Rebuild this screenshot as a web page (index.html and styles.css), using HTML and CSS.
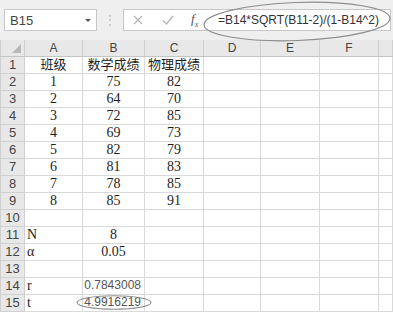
FILE: index.html
```html
<!DOCTYPE html>
<html lang="zh-CN">
<head>
<meta charset="UTF-8">
<meta name="viewport" content="width=device-width, initial-scale=1.0">
<title>t 检验</title>
<link rel="stylesheet" href="styles.css">
</head>
<body>
<div class="toolbar">
  <div class="name-box">
    <span>B15</span>
    <span class="drop"></span>
  </div>
  <div class="grip">⋮</div>
  <div class="formula-box">
    <svg class="tool" width="12" height="12" viewBox="0 0 12 12"><path d="M2 2 L10 10 M10 2 L2 10" stroke="#b4b4b4" stroke-width="1.2" fill="none"/></svg>
    <svg class="tool" width="14" height="12" viewBox="0 0 14 12"><path d="M2 6.5 L5.5 10 L12 2" stroke="#b4b4b4" stroke-width="1.3" fill="none"/></svg>
    <span class="fx">f<sub>x</sub></span>
    <span class="formula">=B14*SQRT(B11-2)/(1-B14^2)</span>
  </div>
  <svg class="mark mark-formula" width="193" height="44" viewBox="0 0 193 44">
    <ellipse cx="96" cy="21.5" rx="93" ry="19" transform="rotate(-2 96 21.5)" fill="none" stroke="#8c8c8c" stroke-width="1.2"/>
  </svg>
</div>

<table class="sheet">
  <colgroup>
    <col class="c-head"><col class="c-a"><col class="c-b"><col class="c-c"><col class="c-d"><col class="c-e"><col class="c-f"><col>
  </colgroup>
  <tr class="col-heads">
    <th class="corner"><span class="tri"></span></th>
    <th>A</th><th>B</th><th>C</th><th>D</th><th>E</th><th>F</th><th></th>
  </tr>
  <tr><th>1</th><td class="zh">班级</td><td class="zh">数学成绩</td><td class="zh">物理成绩</td><td></td><td></td><td></td><td></td></tr>
  <tr><th>2</th><td>1</td><td>75</td><td>82</td><td></td><td></td><td></td><td></td></tr>
  <tr><th>3</th><td>2</td><td>64</td><td>70</td><td></td><td></td><td></td><td></td></tr>
  <tr><th>4</th><td>3</td><td>72</td><td>85</td><td></td><td></td><td></td><td></td></tr>
  <tr><th>5</th><td>4</td><td>69</td><td>73</td><td></td><td></td><td></td><td></td></tr>
  <tr><th>6</th><td>5</td><td>82</td><td>79</td><td></td><td></td><td></td><td></td></tr>
  <tr><th>7</th><td>6</td><td>81</td><td>83</td><td></td><td></td><td></td><td></td></tr>
  <tr><th>8</th><td>7</td><td>78</td><td>85</td><td></td><td></td><td></td><td></td></tr>
  <tr><th>9</th><td>8</td><td>85</td><td>91</td><td></td><td></td><td></td><td></td></tr>
  <tr><th>10</th><td></td><td></td><td></td><td></td><td></td><td></td><td></td></tr>
  <tr><th>11</th><td class="label">N</td><td>8</td><td></td><td></td><td></td><td></td><td></td></tr>
  <tr><th>12</th><td class="label">α</td><td>0.05</td><td></td><td></td><td></td><td></td><td></td></tr>
  <tr><th>13</th><td></td><td></td><td></td><td></td><td></td><td></td><td></td></tr>
  <tr><th>14</th><td class="label">r</td><td class="calc">0.7843008</td><td></td><td></td><td></td><td></td><td></td></tr>
  <tr><th>15</th><td class="label">t</td><td class="calc">4.9916219</td><td></td><td></td><td></td><td></td><td></td></tr>
</table>

<svg class="mark mark-cell" width="80" height="18" viewBox="0 0 80 18">
  <ellipse cx="39" cy="8.5" rx="37" ry="6.8" fill="none" stroke="#8c8c8c" stroke-width="1.1"/>
</svg>
</body>
</html>
```

FILE: styles.css
```css
body {
  margin: 0;
  background-color: #fff;
  font-family: 'Liberation Sans', Arial, sans-serif;
  overflow: hidden;
  position: relative;
}
.toolbar {
  height: 40px;
  background-color: #efefef;
  display: flex;
  align-items: center;
  position: relative;
  box-sizing: border-box;
  padding: 0 2px 0 4px;
}
.name-box {
  width: 93px;
  height: 22px;
  box-sizing: border-box;
  background-color: #fff;
  border: 1px solid #c8c8c8;
  display: flex;
  align-items: center;
  justify-content: space-between;
  padding: 0 5px 0 5px;
  font-size: 13px;
  color: #444;
}
.drop {
  width: 0;
  height: 0;
  border-left: 3px solid transparent;
  border-right: 3px solid transparent;
  border-top: 3px solid #555;
}
.grip {
  width: 26px;
  text-align: center;
  color: #bdbdbd;
  font-size: 12px;
}
.formula-box {
  flex: 1;
  height: 22px;
  box-sizing: border-box;
  background-color: #fff;
  border: 1px solid #c8c8c8;
  display: flex;
  align-items: center;
  padding-left: 8px;
}
.tool {
  margin-right: 17px;
}
.tool + .tool {
  margin-right: 16px;
}
.fx {
  font-family: 'Liberation Serif', serif;
  font-style: italic;
  font-size: 13px;
  color: #555;
  width: 27px;
}
.fx sub {
  font-size: 8px;
}
.formula {
  font-size: 12px;
  color: #333;
}
.mark {
  position: absolute;
  pointer-events: none;
}
.mark-formula {
  left: 201px;
  top: 0;
}
.mark-cell {
  left: 75px;
  top: 294px;
}

.sheet {
  border-collapse: collapse;
  table-layout: fixed;
  width: 100%;
}
.c-head { width: 24px; }
.c-a { width: 58px; }
.c-b { width: 62px; }
.c-c { width: 59px; }
.c-d { width: 57px; }
.c-e { width: 59px; }
.c-f { width: 59px; }
.sheet tr {
  height: 17px;
}
.sheet .col-heads {
  height: 16px;
}
.sheet th {
  background-color: #e8e8e8;
  border: 1px solid #d0d0d0;
  font-weight: normal;
  font-size: 13px;
  color: #444;
  padding: 0;
  line-height: 14px;
  text-align: center;
}
.sheet .col-heads th {
  border-top: none;
  border-bottom-color: #c4c4c4;
  font-size: 12px;
}
.sheet td {
  border: 1px solid #d9d9d9;
  padding: 0;
  font-family: 'Liberation Serif', 'Times New Roman', serif;
  font-size: 14px;
  line-height: 15px;
  color: #1e1e1e;
  text-align: center;
  white-space: nowrap;
  overflow: visible;
}
.sheet td.zh {
  font-family: 'Liberation Serif', 'Noto Sans CJK SC', serif;
  font-size: 13px;
}
.sheet td.label {
  text-align: left;
  padding-left: 2px;
}
.sheet td.calc {
  text-align: right;
  padding-right: 3px;
  font-family: 'Liberation Sans', Arial, sans-serif;
  font-size: 12px;
  color: #555;
}
.corner {
  position: relative;
}
.tri {
  position: absolute;
  right: 3px;
  bottom: 3px;
  width: 0;
  height: 0;
  border-left: 9px solid transparent;
  border-bottom: 9px solid #b9b9b9;
}
```
